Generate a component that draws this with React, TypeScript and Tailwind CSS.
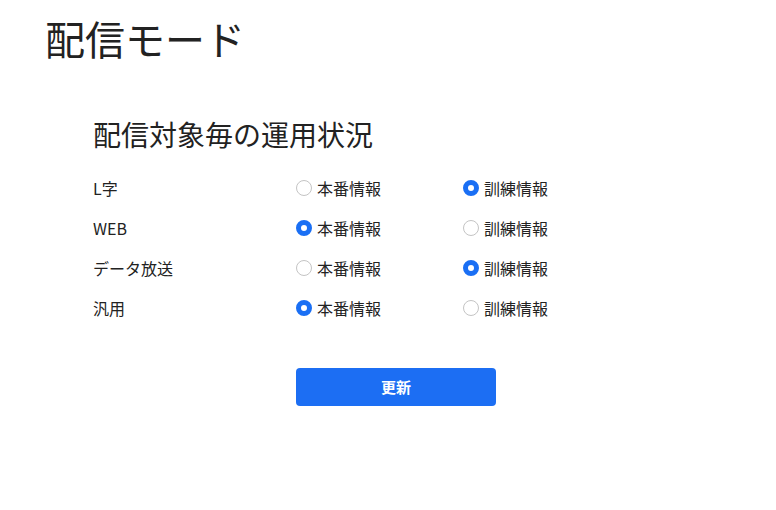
import React, { useState } from "react";

type Mode = "prod" | "train";

function Radio({ checked, label, onClick }: { checked: boolean; label: string; onClick: () => void }) {
  return (
    <label className="flex items-center gap-[5px] cursor-pointer" onClick={onClick}>
      {checked ? (
        <span className="w-4 h-4 rounded-full border-[5px] border-[#1a6ff4] bg-white box-border" />
      ) : (
        <span className="w-4 h-4 rounded-full border border-[#c4c4c4] bg-white box-border" />
      )}
      <span className="text-[16px] leading-6 text-[#222]">{label}</span>
    </label>
  );
}

const rowsInit: { name: string; mode: Mode }[] = [
  { name: "L字", mode: "train" },
  { name: "WEB", mode: "prod" },
  { name: "データ放送", mode: "train" },
  { name: "汎用", mode: "prod" },
];

export default function App() {
  const [rows, setRows] = useState(rowsInit);
  const set = (i: number, m: Mode) =>
    setRows((r) => r.map((x, j) => (j === i ? { ...x, mode: m } : x)));
  return (
    <div
      className="w-[776px] h-[510px] bg-white text-[#222]"
      style={{ fontFamily: '"Noto Sans CJK JP", "Noto Sans", sans-serif' }}
    >
      <h1 className="pl-[45px] pt-[10px] text-[40px] leading-[56px] font-normal">配信モード</h1>
      <div className="pl-[93px] pt-[48px]">
        <h2 className="text-[28px] leading-[40px] font-normal">配信対象毎の運用状況</h2>
        <div className="mt-[14px] flex flex-col">
          {rows.map((r, i) => (
            <div key={r.name} className="flex items-center h-10">
              <div className="w-[203px] text-[16px] text-[#222]">{r.name}</div>
              <div className="w-[167px]">
                <Radio checked={r.mode === "prod"} label="本番情報" onClick={() => set(i, "prod")} />
              </div>
              <div>
                <Radio checked={r.mode === "train"} label="訓練情報" onClick={() => set(i, "train")} />
              </div>
            </div>
          ))}
        </div>
        <div className="pl-[203px] mt-[40px]">
          <button className="w-[200px] h-[38px] rounded-[4px] bg-[#1c6ef3] text-white text-[15px] font-bold">
            更新
          </button>
        </div>
      </div>
    </div>
  );
}
